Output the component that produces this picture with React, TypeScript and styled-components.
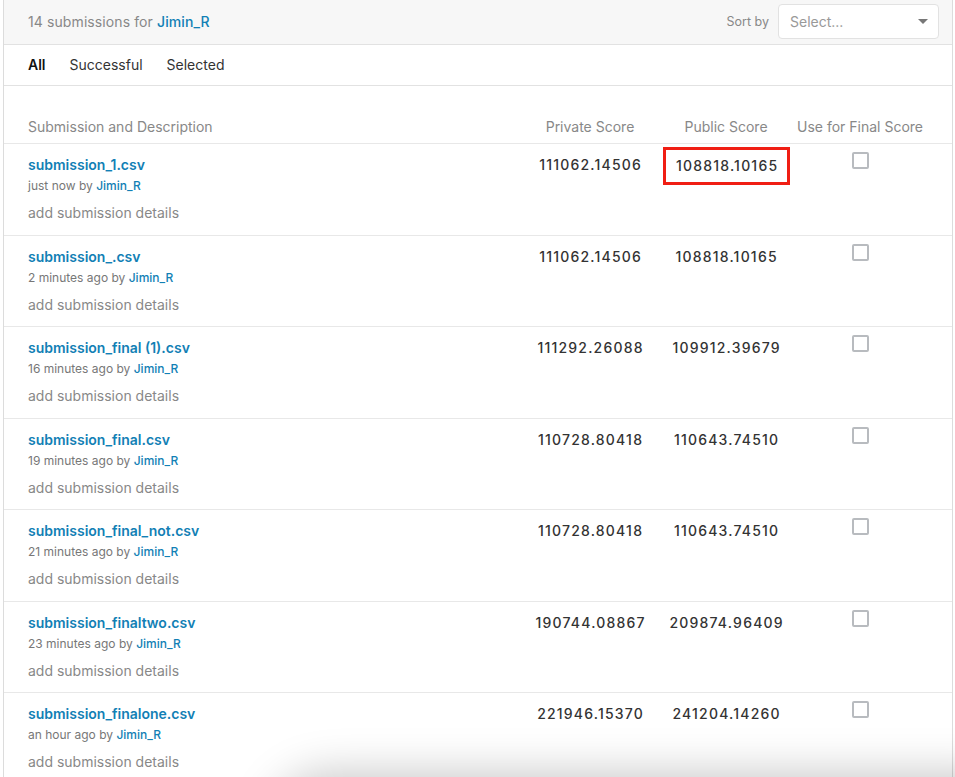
import React from "react";
import styled, { createGlobalStyle } from "styled-components";

const Global = createGlobalStyle`
  html, body { margin: 0; padding: 0; background: #fff; }
  body { font-family: Inter, "Noto Sans", sans-serif; color: #333; overflow: hidden; }
  * { box-sizing: border-box; }
`;

const Panel = styled.div`
  margin: 0 2px 0 3px;
  border-left: 1px solid #dcdcdc;
  border-right: 1px solid #dcdcdc;
  min-height: 777px;
`;

const TopBar = styled.div`
  height: 45px;
  background: #f7f7f7;
  border-bottom: 1px solid #e2e2e2;
  display: flex;
  align-items: center;
  justify-content: space-between;
  padding: 0 13px 1px 24px;
`;

const Count = styled.div`
  font-size: 14px;
  color: #888;
  letter-spacing: 0.1px;
`;

const UserLink = styled.a<{ $small?: boolean }>`
  color: #1280b5;
  font-weight: 500;
  font-size: ${(p) => (p.$small ? "12px" : "14px")};
  text-decoration: none;
`;

const SortArea = styled.div`
  display: flex;
  align-items: center;
  gap: 9px;
`;

const SortLabel = styled.span`
  font-size: 12.5px;
  color: #888;
`;

const SelectBox = styled.div`
  width: 161px;
  height: 35px;
  background: #fff;
  border: 1px solid #e2e2e2;
  border-radius: 4px;
  display: flex;
  align-items: center;
  justify-content: space-between;
  padding: 0 10px 0 11px;
  font-size: 14px;
  color: #999;
`;

const Caret = styled.span`
  width: 0;
  height: 0;
  border-left: 5px solid transparent;
  border-right: 5px solid transparent;
  border-top: 5px solid #777;
`;

const Tabs = styled.div`
  height: 41px;
  border-bottom: 1px solid #e2e2e2;
  display: flex;
  align-items: center;
  gap: 24px;
  padding: 0 0 2px 24px;
`;

const Tab = styled.span<{ $active?: boolean }>`
  font-size: 14px;
  color: ${(p) => (p.$active ? "#111" : "#333")};
  font-weight: ${(p) => (p.$active ? 600 : 400)};
`;

const Grid = styled.div`
  display: grid;
  grid-template-columns: 1fr 144px 128px 140px;
  padding: 0 22px 0 24px;
`;

const HeadRow = styled(Grid)`
  height: 58px;
  align-items: end;
  padding-bottom: 8px;
  border-bottom: 1px solid #e8e8e8;
`;

const HeadCell = styled.div<{ $left?: boolean }>`
  font-size: 14px;
  color: #888;
  text-align: ${(p) => (p.$left ? "left" : "center")};
  white-space: nowrap;
`;

const Row = styled(Grid)`
  height: 91.5px;
  border-bottom: 1px solid #e8e8e8;
  padding-top: 11px;
`;

const Desc = styled.div`
  display: flex;
  flex-direction: column;
`;

const FileLink = styled.a`
  font-size: 14px;
  font-weight: 600;
  color: #1280b5;
  text-decoration: none;
  line-height: 20px;
`;

const Meta = styled.div`
  font-size: 12px;
  color: #777;
  line-height: 17px;
  margin-top: 2px;
`;

const Details = styled.div`
  font-size: 14px;
  color: #888;
  line-height: 20px;
  margin-top: 9px;
`;

const Score = styled.div<{ $highlight?: boolean }>`
  font-size: 14px;
  font-weight: 500;
  color: #333;
  letter-spacing: 1.2px;
  text-indent: 1.2px;
  text-align: center;
  line-height: 20px;
  align-self: start;
  margin-top: ${(p) => (p.$highlight ? "-8px" : "0")};
  padding: ${(p) => (p.$highlight ? "6px 0" : "0")};
  border: ${(p) => (p.$highlight ? "3px solid #f01e14" : "none")};
  margin-left: ${(p) => (p.$highlight ? "1px" : "0")};
`;

const CheckCell = styled.div`
  display: flex;
  justify-content: center;
  margin-top: -3px;
`;

const Checkbox = styled.span`
  width: 17px;
  height: 17px;
  border: 2px solid #b8bbbf;
  border-radius: 2px;
  background: #fff;
`;

const BottomShade = styled.div`
  position: fixed;
  left: 270px;
  right: -40px;
  bottom: -70px;
  height: 70px;
  border-radius: 60px 0 0 0;
  box-shadow: 0 -4px 45px rgba(0, 0, 0, 0.22);
  background: #ddd;
  pointer-events: none;
`;

const rows = [
  { file: "submission_1.csv", when: "just now", priv: "111062.14506", pub: "108818.10165", hl: true },
  { file: "submission_.csv", when: "2 minutes ago", priv: "111062.14506", pub: "108818.10165" },
  { file: "submission_final (1).csv", when: "16 minutes ago", priv: "111292.26088", pub: "109912.39679" },
  { file: "submission_final.csv", when: "19 minutes ago", priv: "110728.80418", pub: "110643.74510" },
  { file: "submission_final_not.csv", when: "21 minutes ago", priv: "110728.80418", pub: "110643.74510" },
  { file: "submission_finaltwo.csv", when: "23 minutes ago", priv: "190744.08867", pub: "209874.96409" },
  { file: "submission_finalone.csv", when: "an hour ago", priv: "221946.15370", pub: "241204.14260" },
];

export default function App() {
  return (
    <>
      <Global />
      <Panel>
        <TopBar>
          <Count>
            14 submissions for <UserLink>Jimin_R</UserLink>
          </Count>
          <SortArea>
            <SortLabel>Sort by</SortLabel>
            <SelectBox>
              <span>Select...</span>
              <Caret />
            </SelectBox>
          </SortArea>
        </TopBar>
        <Tabs>
          <Tab $active>All</Tab>
          <Tab>Successful</Tab>
          <Tab>Selected</Tab>
        </Tabs>
        <HeadRow>
          <HeadCell $left>Submission and Description</HeadCell>
          <HeadCell>Private Score</HeadCell>
          <HeadCell>Public Score</HeadCell>
          <HeadCell>Use for Final Score</HeadCell>
        </HeadRow>
        {rows.map((r) => (
          <Row key={r.file}>
            <Desc>
              <FileLink>{r.file}</FileLink>
              <Meta>
                {r.when} by <UserLink $small>Jimin_R</UserLink>
              </Meta>
              <Details>add submission details</Details>
            </Desc>
            <Score>{r.priv}</Score>
            <Score $highlight={r.hl}>{r.pub}</Score>
            <CheckCell>
              <Checkbox />
            </CheckCell>
          </Row>
        ))}
      </Panel>
      <BottomShade />
    </>
  );
}
